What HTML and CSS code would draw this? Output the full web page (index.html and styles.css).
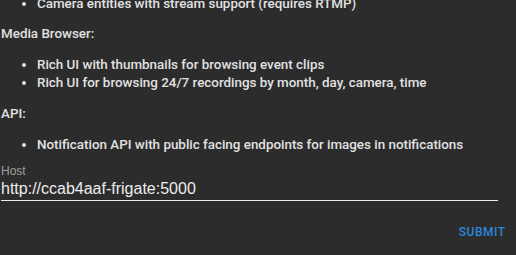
FILE: index.html
```html
<!DOCTYPE html>
<html lang="en">
<head>
<meta charset="UTF-8">
<meta name="viewport" content="width=device-width, initial-scale=1.0">
<title>Frigate</title>
<link rel="stylesheet" href="styles.css">
</head>
<body>
  <div class="card">
    <div class="markdown">
      <ul class="lead">
        <li>Camera entities with stream support (requires RTMP)</li>
      </ul>
      <p>Media Browser:</p>
      <ul>
        <li>Rich UI with thumbnails for browsing event clips</li>
        <li>Rich UI for browsing 24/7 recordings by month, day, camera, time</li>
      </ul>
      <p>API:</p>
      <ul>
        <li>Notification API with public facing endpoints for images in notifications</li>
      </ul>
    </div>
    <div class="field">
      <label for="host">Host</label>
      <input type="text" id="host" value="http://ccab4aaf-frigate:5000">
    </div>
    <div class="actions">
      <button>Submit</button>
    </div>
  </div>
</body>
</html>
```

FILE: styles.css
```css
body { margin: 0; background-color: #2c2c2c; color: #e1e1e1; font-family: Roboto, "Noto Sans", sans-serif; font-size: 13.4px; font-weight: 500; overflow: hidden; }
.card { width: 497px; padding: 0 0 0 1px; margin-top: -18px; }
.markdown { line-height: 18px; }
.markdown p { margin: 13px 0; }
.markdown ul { margin: 13px 0; padding-left: 36px; }
.markdown ul.lead { margin-bottom: 12px; }
.markdown ul.lead + p { margin-top: 12px; }
.field { display: flex; flex-direction: column; margin-top: -3.5px; }
.field label { font-size: 12px; color: #a0a0a0; font-family: "Liberation Sans", Arial, sans-serif; font-weight: 400; line-height: 14px; }
.field input { font-family: "Liberation Sans", Arial, sans-serif; font-size: 16px; color: #ececec; background: transparent; border: none; border-bottom: 1px solid #ececec; padding: 2px 0 2px 0; margin: 0; outline: none; }
.actions { display: flex; justify-content: flex-end; width: 515px; margin-top: 18px; }
.actions button { font-family: Roboto, sans-serif; font-weight: 500; font-size: 12px; letter-spacing: 0.5px; text-transform: uppercase; color: #2a87de; background: none; border: none; padding: 6px 10.5px; }
```
